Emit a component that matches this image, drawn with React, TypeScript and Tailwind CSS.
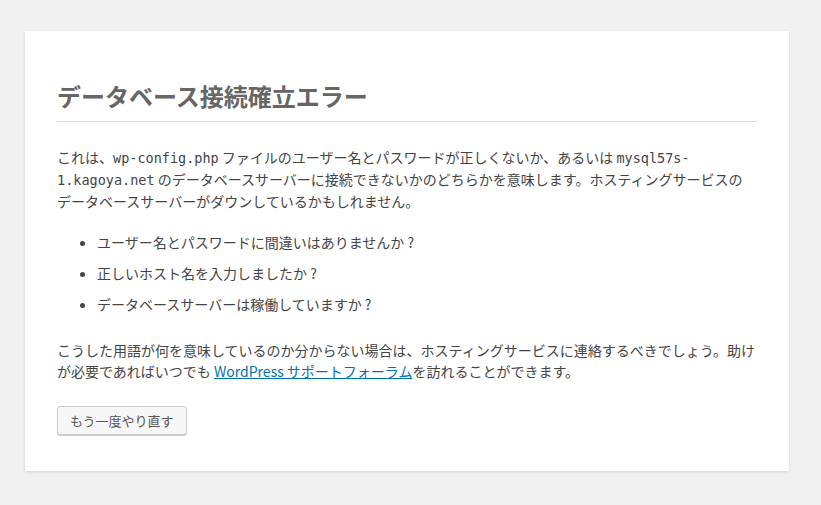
import React from 'react';

const jp = "font-['Noto_Sans_CJK_JP','Noto_Sans',sans-serif]";
const mono = "font-['DejaVu_Sans_Mono','Liberation_Mono',monospace] text-[13.5px]";

const checks = [
  'ユーザー名とパスワードに間違いはありませんか ?',
  '正しいホスト名を入力しましたか ?',
  'データベースサーバーは稼働していますか ?',
];

export default function App() {
  return (
    <div className={`min-h-screen bg-[#f1f1f1] pt-[31px] pb-8 text-[#444] ${jp}`}>
      <div className="ml-[25px] w-[764px] bg-white px-8 pt-[46px] pb-4 shadow-[0_1px_3px_rgba(0,0,0,0.13)]">
        <h1 className="border-b border-[#dadada] pb-[7px] text-[24px] leading-[37px] font-bold text-[#666]">
          データベース接続確立エラー
        </h1>

        <p className="mt-[25px] mb-5 text-[14px] leading-[21px]">
          これは、<code className={mono}>wp-config.php</code> ファイルのユーザー名とパスワードが正しくないか、あるいは{' '}
          <code className={mono}>mysql57s-1.kagoya.net</code>{' '}
          のデータベースサーバーに接続できないかのどちらかを意味します。ホスティングサービスの
          <br />
          データベースサーバーがダウンしているかもしれません。
        </p>

        <ul className="list-disc pl-10 text-[14px] leading-[21px]">
          {checks.map((c) => (
            <li key={c} className="mb-[10px]">
              {c}
            </li>
          ))}
        </ul>

        <p className="mt-[25px] mb-5 text-[14px] leading-[21px]">
          こうした用語が何を意味しているのか分からない場合は、ホスティングサービスに連絡するべきでしょう。助けが必要であればいつでも{' '}
          <a href="#" className="text-[#0073aa] underline">
            WordPress サポートフォーラム
          </a>
          を訪れることができます。
        </p>

        <p className="mt-6 mb-5">
          <a
            href="#"
            className="inline-block h-[29px] rounded-[3px] border border-[#ccc] bg-[#f7f7f7] px-3 pb-px align-top text-[13px] leading-[27px] text-[#555] shadow-[0_1px_0_#ccc]"
          >
            もう一度やり直す
          </a>
        </p>
      </div>
    </div>
  );
}
